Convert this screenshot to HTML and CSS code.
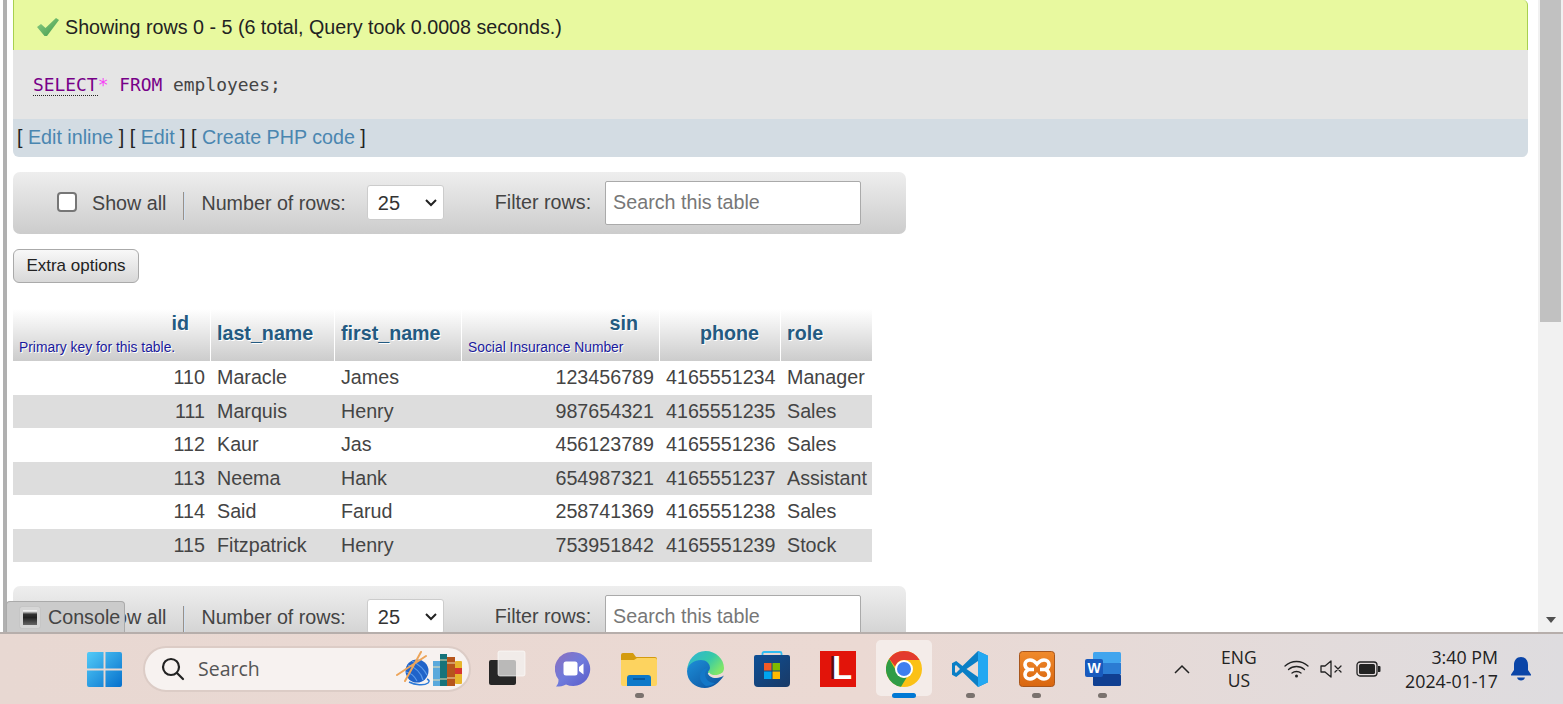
FILE: index.html
```html
<!DOCTYPE html>
<html lang="en">
<head>
    <meta charset="UTF-8">
    <meta name="viewport" content="width=device-width, initial-scale=1.0">
    <title>phpMyAdmin - employees</title>
    <link rel="stylesheet" href="styles.css">
</head>
<body>
    <div class="window">
        <div class="page">
            <div class="left-strip"></div>
            <main class="content">
                <div class="message">
                    <svg class="check" width="24" height="22" viewBox="0 0 24 22">
                        <defs><linearGradient id="tick" x1="0" y1="0" x2="1" y2="1"><stop offset="0" stop-color="#8fcf86"/><stop offset="1" stop-color="#3f9a4a"/></linearGradient></defs>
                        <path d="M1 11l4-3 4.500 4L20 2l3 2-12 16H8.500z" fill="url(#tick)"/>
                    </svg>
                    <span>Showing rows 0 - 5 (6 total, Query took 0.0008 seconds.)</span>
                </div>
                <div class="sql"><span class="kw kw-link">SELECT</span><span class="star">*</span> <span class="kw">FROM</span> employees;</div>
                <div class="links">[ <a href="#">Edit inline</a> ] [ <a href="#">Edit</a> ] [ <a href="#">Create PHP code</a> ]</div>

                <div class="nav-bar">
                    <input type="checkbox" class="show-all">
                    <span class="show-label">Show all</span>
                    <span class="sep"></span>
                    <span>Number of rows:</span>
                    <select class="rows"><option>25</option></select>
                    <span class="filter-label">Filter rows:</span>
                    <input type="text" class="filter" placeholder="Search this table">
                </div>

                <button class="extra">Extra options</button>

                <table class="results">
                    <thead>
                        <tr>
                            <th class="col-id num sub">id<small>Primary key for this table.</small></th>
                            <th class="col-last">last_name</th>
                            <th class="col-first">first_name</th>
                            <th class="col-sin num sub">sin<small>Social Insurance Number</small></th>
                            <th class="col-phone num">phone</th>
                            <th class="col-role">role</th>
                        </tr>
                    </thead>
                    <tbody>
                        <tr><td class="r">110</td><td>Maracle</td><td>James</td><td class="r">123456789</td><td class="r">4165551234</td><td>Manager</td></tr>
                        <tr><td class="r">111</td><td>Marquis</td><td>Henry</td><td class="r">987654321</td><td class="r">4165551235</td><td>Sales</td></tr>
                        <tr><td class="r">112</td><td>Kaur</td><td>Jas</td><td class="r">456123789</td><td class="r">4165551236</td><td>Sales</td></tr>
                        <tr><td class="r">113</td><td>Neema</td><td>Hank</td><td class="r">654987321</td><td class="r">4165551237</td><td>Assistant</td></tr>
                        <tr><td class="r">114</td><td>Said</td><td>Farud</td><td class="r">258741369</td><td class="r">4165551238</td><td>Sales</td></tr>
                        <tr><td class="r">115</td><td>Fitzpatrick</td><td>Henry</td><td class="r">753951842</td><td class="r">4165551239</td><td>Stock</td></tr>
                    </tbody>
                </table>

                <div class="nav-bar">
                    <input type="checkbox" class="show-all">
                    <span class="show-label">Show all</span>
                    <span class="sep"></span>
                    <span>Number of rows:</span>
                    <select class="rows"><option>25</option></select>
                    <span class="filter-label">Filter rows:</span>
                    <input type="text" class="filter" placeholder="Search this table">
                </div>
            </main>
            <div class="scrollbar">
                <div class="thumb"></div>
                <div class="arrow"></div>
            </div>
            <div class="console">
                <span class="console-icon"></span>
                <span>Console</span>
            </div>
        </div>

        <footer class="taskbar">
            <svg class="start" width="36" height="36" viewBox="0 0 36 36">
                <defs>
                    <linearGradient id="win" x1="0" y1="0" x2="1" y2="1"><stop offset="0" stop-color="#52cbf8"/><stop offset="1" stop-color="#0670cc"/></linearGradient>
                </defs>
                <path d="M2 0h15v17H0V2a2 2 0 0 1 2-2zM19 0h15a2 2 0 0 1 2 2v15H19zM0 19h17v17H2a2 2 0 0 1-2-2zM19 19h17v15a2 2 0 0 1-2 2H19z" fill="url(#win)"/>
            </svg>

            <div class="search">
                <svg width="26" height="26" viewBox="0 0 26 26" fill="none" stroke="#222" stroke-width="2.2"><circle cx="11" cy="11" r="8"/><path d="M17 17l6 6" stroke-linecap="round"/></svg>
                <span class="search-text">Search</span>
                <svg class="search-art" width="68" height="40" viewBox="0 0 68 40">
                    <circle cx="21" cy="22" r="11.500" fill="#1f63c9"/>
                    <path d="M12 16c6 2 13 7 15 15M16 12c6 3 12 8 15 14M10 23c5 1 9 5 11 9" stroke="#5b9bea" stroke-width="1.200" fill="none"/>
                    <path d="M1 26L30 7M9 32L25 3" stroke="#eda55a" stroke-width="2" stroke-linecap="round"/>
                    <path d="M13 33c6 3 15 4 19 1 2-2 1-3-1-4" stroke="#2b79d8" stroke-width="1.500" fill="none"/>
                    <rect x="37" y="12" width="7" height="25" fill="#5aa9dc"/>
                    <rect x="44" y="5" width="7" height="32" fill="#16737a"/>
                    <rect x="51" y="8" width="8" height="29" fill="#b6551c"/>
                    <rect x="59" y="12" width="7" height="23" rx="1" fill="#e7b52c"/>
                    <rect x="59" y="19" width="7" height="6" fill="#d5352f"/>
                    <path d="M37 18h7M37 31h7M44 11h7M44 30h7M51 14h8M51 29h8" stroke="#f0e0b0" stroke-width="1"/>
                </svg>
            </div>

            <div class="task-icons">
                <div class="task-icon">
                    <svg width="38" height="38" viewBox="0 0 38 38">
                        <rect x="1" y="10" width="27" height="25" rx="2" fill="#262626"/>
                        <rect x="10" y="1" width="27" height="25" rx="2" fill="#f4f2f1" fill-opacity=".72" stroke="#fff" stroke-opacity=".6"/>
                    </svg>
                </div>
                <div class="task-icon">
                    <svg width="36" height="36" viewBox="0 0 36 36">
                        <defs><linearGradient id="meet" x1="0" y1="0" x2="1" y2="1"><stop offset="0" stop-color="#8d6fbd"/><stop offset=".5" stop-color="#6f7bdc"/><stop offset="1" stop-color="#5a5ac8"/></linearGradient></defs>
                        <path d="M18 1a17 17 0 1 1-7 32.400C8 35 5 35.500 1 35.500c2-2 2.600-4 2.500-7A17 17 0 0 1 18 1z" fill="url(#meet)"/>
                        <rect x="8.500" y="10.500" width="14" height="14" rx="2.500" fill="#fff"/>
                        <path d="M24 16l4.500-3.500v11L24 20z" fill="#fff"/>
                    </svg>
                </div>
                <div class="task-icon has-dot">
                    <svg width="36" height="34" viewBox="0 0 36 34">
                        <path d="M0 3a2 2 0 0 1 2-2h10l3 4h19a2 2 0 0 1 2 2v4H0z" fill="#d49b0f"/>
                        <path d="M0 8h13l3-2h18a2 2 0 0 1 2 2v24a2 2 0 0 1-2 2H2a2 2 0 0 1-2-2z" fill="#fdd35f"/>
                        <path d="M6 34V26a3 3 0 0 1 3-3h18a3 3 0 0 1 3 3v8z" fill="#0c78c9"/>
                        <path d="M12 27h12" stroke="#074f8f" stroke-width="1.500"/>
                    </svg>
                </div>
                <div class="task-icon">
                    <svg width="37" height="37" viewBox="0 0 37 37">
                        <defs>
                            <linearGradient id="edge-a" x1="0" y1="0" x2="1" y2=".6"><stop offset="0" stop-color="#2fb2d8"/><stop offset=".6" stop-color="#36c9a8"/><stop offset="1" stop-color="#7ee66a"/></linearGradient>
                            <linearGradient id="edge-b" x1="0" y1="0" x2="1" y2="1"><stop offset="0" stop-color="#1d8fd8"/><stop offset="1" stop-color="#0c4f9c"/></linearGradient>
                        </defs>
                        <path d="M18.500 0C29 0 37 8 37 17c0 5-4 7-9 7-4 0-7-1-7.500-3 0-1 2-2 2-4 0-4-4-7-8.500-7C8 10 1 15 0 20 .5 9 8 0 18.500 0z" fill="url(#edge-a)"/>
                        <path d="M0 20C1 13 7 9 14 9c5 0 9 3.500 9 8 0 2-2 3-2 4 .5 4 4 6 8 6 3 0 6-1 8-2.500C32 32 26 37 18 37 8 37 0 30 0 20z" fill="url(#edge-b)"/>
                        <path d="M13 26c0-6 4-9 8-9-1 2-3 3-3 6 0 5 4 9 10 9-2 2-6 3-9 3-3-2-6-5-6-9z" fill="#1478c8"/>
                        <path d="M21.500 22c1.500 2.500 4 3.500 6.500 3.500 3 0 6-1 8-3" fill="none" stroke="#ecdcd6" stroke-width="1.800"/>
                    </svg>
                </div>
                <div class="task-icon">
                    <svg width="36" height="36" viewBox="0 0 36 36">
                        <defs><linearGradient id="store" x1="0" y1="0" x2="1" y2="1"><stop offset="0" stop-color="#0d4f96"/><stop offset="1" stop-color="#1a3a66"/></linearGradient></defs>
                        <path d="M8.500 5V2.500A1.500 1.500 0 0 1 10 1h16a1.500 1.500 0 0 1 1.500 1.500V5" fill="none" stroke="#31bdf2" stroke-width="1.800"/>
                        <path d="M0 6a2 2 0 0 1 2-2h32a2 2 0 0 1 2 2v26a4 4 0 0 1-4 4H4a4 4 0 0 1-4-4z" fill="url(#store)"/>
                        <rect x="10" y="12" width="7.500" height="7.500" fill="#f25a26"/>
                        <rect x="18.500" y="12" width="7.500" height="7.500" fill="#7fba00"/>
                        <rect x="10" y="20.500" width="7.500" height="7.500" fill="#00a4ef"/>
                        <rect x="18.500" y="20.500" width="7.500" height="7.500" fill="#ffb900"/>
                    </svg>
                </div>
                <div class="task-icon">
                    <div class="l-app"><span class="l-shadow">L</span><span class="l-letter">L</span></div>
                </div>
                <div class="task-icon is-active">
                    <svg width="36" height="36" viewBox="0 0 36 36">
                        <circle cx="18" cy="18" r="18" fill="#fbc116"/>
                        <path d="M18 0a18 18 0 0 1 15.600 9H18a9 9 0 0 0-8.700 6.700L3.200 7.700A18 18 0 0 1 18 0z" fill="#e33b2e"/>
                        <path d="M3.200 7.700l7.900 13.700a8 8 0 0 0 9.700 4.900L15 35.800A18 18 0 0 1 3.200 7.700z" fill="#2f9c47"/>
                        <circle cx="18" cy="18" r="9" fill="#fff"/>
                        <circle cx="18" cy="18" r="7" fill="#3f7ff0"/>
                    </svg>
                </div>
                <div class="task-icon has-dot">
                    <svg width="36" height="36" viewBox="0 0 36 36">
                        <path d="M26 0l10 4.800v26.400L26 36 10.500 21l-6.300 5L0 23.800V12.200L4.200 10l6.300 5z" fill="#0a7fc6"/>
                        <path d="M26 0l10 4.800v26.400L26 36z" fill="#23a8f2"/>
                        <path d="M26 10L14.500 18 26 26z" fill="#eadcd6"/>
                        <path d="M4 14l-1 1v6l1 1 4-4z" fill="#eadcd6"/>
                    </svg>
                </div>
                <div class="task-icon has-dot">
                    <svg width="36" height="36" viewBox="0 0 36 36">
                        <defs><linearGradient id="xampp" x1="0" y1="0" x2="0" y2="1"><stop offset="0" stop-color="#f08a2c"/><stop offset="1" stop-color="#d9660f"/></linearGradient></defs>
                        <rect x=".5" y=".5" width="35" height="35" rx="3" fill="url(#xampp)" stroke="#a8561c"/>
                        <path d="M18 13c-2-2.500-4-4-7-4-3 0-5 2-5 4.500 0 2 1 3.500 3 5-2 1.500-3 3-3 5C6 26 8 28 11 28c3 0 5-1.500 7-4 2 2.500 4 4 7 4 3 0 5-2 5-4.500 0-2-1-3.500-3-5 2-1.500 3-3 3-5C30 11 28 9 25 9c-3 0-5 1.500-7 4z" fill="none" stroke="#fff" stroke-width="3.600"/>
                        <path d="M9 18.500h6M21 18.500h6" stroke="#fff" stroke-width="3.400"/>
                    </svg>
                </div>
                <div class="task-icon has-dot">
                    <svg width="36" height="34" viewBox="0 0 36 34">
                        <rect x="8" y="0" width="28" height="11" rx="1.500" fill="#41a5ee"/>
                        <rect x="8" y="11" width="28" height="11" fill="#2b7cd3"/>
                        <rect x="8" y="22" width="28" height="12" rx="1.500" fill="#103f91"/>
                        <rect x="0" y="7" width="18" height="18" rx="2" fill="#185abd"/>
                        <text x="9" y="21" class="word-w">W</text>
                    </svg>
                </div>
            </div>

            <div class="tray">
                <svg class="chevron" width="18" height="10" viewBox="0 0 18 10" fill="none" stroke="#222" stroke-width="1.500"><path d="M2 9l7-7 7 7"/></svg>
                <div class="lang">ENG<br>US</div>
                <svg class="wifi" width="25" height="20" viewBox="0 0 25 20" fill="none" stroke="#222" stroke-width="1.300" stroke-linecap="round"><path d="M1 7c6.500-6 16.500-6 23 0M4.500 10.500c4.500-4 11.500-4 16 0M8 14c2.500-2 6.500-2 9 0"/><circle cx="12.500" cy="17" r="1.500" fill="#222" stroke="none"/></svg>
                <svg class="speaker" width="24" height="20" viewBox="0 0 24 20" fill="none" stroke="#222" stroke-width="1.300"><path d="M1 7v6h4l6 5V2L5 7z" stroke-linejoin="round"/><path d="M15 7l6 6M21 7l-6 6" stroke-linecap="round"/></svg>
                <svg class="battery" width="25" height="16" viewBox="0 0 25 16"><rect x="1" y="1" width="20" height="14" rx="3" fill="none" stroke="#222" stroke-width="1.300"/><rect x="3" y="3" width="16" height="10" rx="1.500" fill="#222"/><path d="M22 5h1.500a1 1 0 0 1 1 1v4a1 1 0 0 1-1 1H22z" fill="#222"/></svg>
                <div class="clock">3:40 PM<br>2024-01-17</div>
                <svg class="bell" width="20" height="24" viewBox="0 0 20 24"><path d="M10 0c4.500 0 7 3.500 7 8v5l3 4.500v1H0v-1L3 13V8c0-4.500 2.500-8 7-8z" fill="#0a45a8"/><path d="M6 20.500h8c-.5 2-2 3-4 3s-3.500-1-4-3z" fill="#0a45a8"/></svg>
            </div>
        </footer>
    </div>
</body>
</html>
```

FILE: styles.css
```css
* {
    box-sizing: border-box;
}

html, body {
    margin: 0;
    padding: 0;
    height: 100%;
    overflow: hidden;
}

body {
    font-family: "Liberation Sans", Arial, sans-serif;
    font-size: 19.7px;
    color: #444;
    background: #fff;
}

.window {
    display: flex;
    flex-direction: column;
    height: 704px;
}

/* browser page area */
.page {
    position: relative;
    display: flex;
    height: 632px;
    overflow: hidden;
    flex: none;
}

.left-strip {
    flex: none;
    width: 4px;
    margin-left: 3px;
    background: #b0b0b0;
}

.content {
    flex: none;
    width: 1515px;
    margin-left: 6px;
}

.message {
    display: flex;
    align-items: center;
    height: 50px;
    padding: 4px 0 0 22px;
    gap: 5px;
    color: #222;
    background: #e8f99f;
    border-left: 1px solid #a8d050;
    border-right: 1px solid #a8d050;
    border-top-right-radius: 5px;
}

.sql {
    height: 69px;
    padding: 24px 0 0 20px;
    font-family: "DejaVu Sans Mono", monospace;
    font-size: 17.9px;
    line-height: 22px;
    white-space: pre;
    background: #e5e5e5;
}

.kw {
    color: #708;
}

.kw-link {
    border-bottom: 1px dotted #222;
}

.star {
    color: #f0f;
    opacity: .7;
}

.links {
    height: 38px;
    padding: 5px 0 0 4px;
    line-height: 26px;
    color: #222;
    background: #d3dce3;
    border-radius: 0 0 6px 6px;
}

.links a {
    color: #4a86b0;
    text-decoration: none;
}

/* table navigation */
.nav-bar {
    display: flex;
    align-items: center;
    width: 893px;
    height: 62px;
    margin-top: 15px;
    padding-left: 44px;
    background: linear-gradient(#eeeeee, #cccccc);
    border-radius: 7px;
}

.nav-bar:last-child {
    margin-top: 24px;
}

.show-all {
    appearance: none;
    width: 20px;
    height: 20px;
    margin: -2px 15px 0 0;
    background: #fff;
    border: 2px solid #767676;
    border-radius: 4px;
}

.sep {
    width: 2px;
    height: 28px;
    margin: 6px 16px 0 17px;
    background: linear-gradient(90deg, #9a9088 50%, #cfe0f2 50%);
}

.rows {
    appearance: none;
    width: 77px;
    height: 35px;
    margin: -1px 0 0 21px;
    padding-left: 10px;
    font: inherit;
    font-size: 20px;
    color: #333;
    background: #fff url("data:image/svg+xml,%3Csvg xmlns='http://www.w3.org/2000/svg' width='12' height='8'%3E%3Cpath d='M1 1l5 5 5-5' fill='none' stroke='%23222' stroke-width='2'/%3E%3C/svg%3E") no-repeat right 6px center;
    border: 1px solid #ccc;
    border-radius: 3px;
}

.filter-label {
    margin: -2px 0 0 51px;
}

.filter {
    width: 256px;
    height: 44px;
    margin: -1px 0 0 14px;
    padding: 0 7px;
    font: inherit;
    background: #fff;
    border: 1px solid #aaa;
    border-radius: 2px;
}

.filter::placeholder {
    color: #777;
}

.extra {
    display: block;
    width: 126px;
    height: 34px;
    margin-top: 15px;
    padding: 0;
    font-family: inherit;
    font-size: 17px;
    color: #222;
    background: linear-gradient(#f8f8f8, #d8d8d8);
    border: 1px solid #aaa;
    border-radius: 6px;
}

/* results table */
.results {
    width: 859px;
    margin-top: 26px;
    table-layout: fixed;
    border-collapse: separate;
    border-spacing: 0;
}

.results th {
    height: 52px;
    padding: 0 6px 4px;
    font-size: 19.7px;
    text-align: left;
    color: #235a81;
    text-shadow: 1px 1px 0 #fff;
    background: linear-gradient(#ffffff, #cccccc);
    border-right: 1px solid #fff;
}

.results th:last-child {
    border-right: 0;
}

.results th.num {
    padding-right: 21px;
    text-align: right;
}

.results th.sub {
    padding-bottom: 2px;
}

.results small {
    display: block;
    margin: 4px -15px 0 0;
    font-size: 13.85px;
    font-weight: normal;
    line-height: 17px;
    text-align: left;
    color: #1a1a9c;
}

.col-id { width: 198px; }
.col-last { width: 124px; }
.col-first { width: 127px; }
.col-sin { width: 198px; }
.col-phone { width: 121px; }
.col-role { width: 91px; }

.results td {
    height: 33.5px;
    padding: 0 6px;
    white-space: nowrap;
}

.results td.r {
    text-align: right;
}

.results tbody tr:nth-child(even) {
    background: #ddd;
}

/* fake browser scrollbar */
.scrollbar {
    position: absolute;
    top: 0;
    right: 0;
    bottom: 0;
    width: 25px;
    padding-left: 2px;
    background: #f1f1f1;
}

.thumb {
    width: 21px;
    height: 322px;
    background: #c1c1c1;
}

.arrow {
    position: absolute;
    left: 8px;
    bottom: 9px;
    border-left: 5px solid transparent;
    border-right: 5px solid transparent;
    border-top: 6px solid #505050;
}

.console {
    position: absolute;
    left: 6px;
    bottom: 0;
    display: flex;
    align-items: center;
    gap: 8px;
    width: 119px;
    height: 31px;
    padding-left: 13px;
    background: #cbcbcb;
    border: 1px solid #aaa;
    border-bottom: 0;
    border-radius: 4px 4px 0 0;
}

.console-icon {
    width: 20px;
    height: 21px;
    background: linear-gradient(#f0f0f0 8%, #333 28%, #222 50%, #666);
    border: 3px solid #d6d6d6;
    box-shadow: 0 0 1px #999;
    border-radius: 2px;
}

/* windows taskbar */
.taskbar {
    display: flex;
    align-items: center;
    height: 72px;
    padding-left: 87px;
    background: linear-gradient(90deg, #e8d8d2, #ebd9d3 55%, #dedcdf);
    border-top: 2px solid #b6aeab;
    font-family: "Open Sans", "Noto Sans", sans-serif;
}

.start {
    flex: none;
    width: 35px;
    height: 35px;
    margin-right: 21px;
}

.search {
    display: flex;
    align-items: center;
    flex: none;
    width: 328px;
    height: 46px;
    padding: 0 5px 0 15px;
    background: #f7f2f0;
    border: 2px solid #dcccc6;
    border-radius: 23px;
}

.search-text {
    margin: -2px 0 0 12px;
    font-size: 19.5px;
    color: #555;
}

.search-art {
    margin-left: auto;
}

.task-icons {
    display: flex;
    flex: none;
    margin-left: 3px;
}

.task-icon {
    position: relative;
    display: flex;
    align-items: center;
    justify-content: center;
    width: 66.2px;
    height: 70px;
}

.has-dot::after {
    content: "";
    position: absolute;
    left: 50%;
    bottom: 6px;
    width: 9px;
    height: 5px;
    margin-left: -4.5px;
    background: #7a726e;
    border-radius: 3px;
}

.is-active::before {
    content: "";
    position: absolute;
    z-index: 0;
    left: 5px;
    top: 6px;
    width: 56px;
    height: 56px;
    background: #f4ece9;
    border-radius: 5px;
}

.is-active::after {
    content: "";
    position: absolute;
    left: 50%;
    bottom: 6px;
    width: 24px;
    height: 5px;
    margin-left: -12px;
    background: #0078d4;
    border-radius: 3px;
}

.is-active svg {
    position: relative;
}

.l-app {
    position: relative;
    width: 36px;
    height: 36px;
    background: #e2140a;
    font-family: "Liberation Sans", sans-serif;
    font-size: 33px;
    font-weight: bold;
    line-height: 36px;
}

.l-letter,
.l-shadow {
    position: absolute;
    top: -1px;
    left: 12px;
    color: #fff;
}

.l-shadow {
    left: 9px;
    color: #5c0d0a;
}

.word-w {
    font-family: "Liberation Sans", sans-serif;
    font-size: 14px;
    font-weight: bold;
    fill: #fff;
    text-anchor: middle;
}

.tray {
    display: flex;
    align-items: center;
    flex: none;
    margin-left: 37px;
    color: #222;
}

.lang {
    width: 46px;
    margin-left: 25px;
    font-size: 17.5px;
    line-height: 23px;
    text-align: center;
}

.wifi {
    margin-left: 22px;
}

.speaker {
    margin-left: 11px;
}

.battery {
    margin-left: 12px;
}

.clock {
    width: 117px;
    font-size: 17.8px;
    line-height: 24px;
    text-align: right;
}

.bell {
    margin-left: 13px;
}
```
